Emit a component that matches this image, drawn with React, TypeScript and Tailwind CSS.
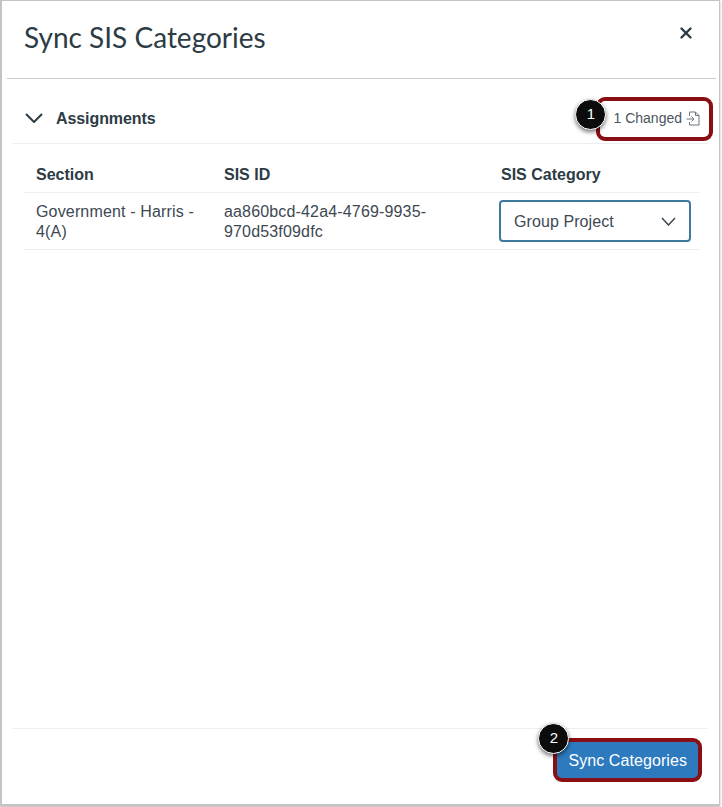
import { X } from "lucide-react";

const Badge = ({ n }: { n: number }) => (
  <span className="absolute flex h-[31px] w-[31px] items-center justify-center rounded-full border border-white bg-[#0c0c0c] text-[15px] text-white shadow-[0_2px_4px_rgba(0,0,0,0.55)]">
    {n}
  </span>
);

const Chevron = ({ w, h, sw, color }: { w: number; h: number; sw: number; color: string }) => (
  <svg width={w} height={h} viewBox={`0 0 ${w} ${h}`} fill="none" stroke={color} strokeWidth={sw}>
    <path d={`M1 1 L${w / 2} ${h - 1} L${w - 1} 1`} />
  </svg>
);

const ImportIcon = () => (
  <svg className="-ml-[1px] mr-[1px]" width="14" height="15" viewBox="0 0 14 15" fill="none" stroke="#6b7580" strokeWidth="1">
    <path d="M3.5 5V1h6l3.5 3.5V14H3.5v-3" />
    <path d="M9.5 1v3.5H13" />
    <path d="M0.5 8h7.5M5.5 5.5 8 8l-2.5 2.5" />
  </svg>
);

export default function App() {
  return (
    <div className="flex h-[807px] w-[722px] flex-col bg-white pb-[1px] pr-[2px] font-['Liberation_Sans',sans-serif] text-[#2d3b45]">
      <div className="flex h-full flex-col border-b-2 border-l-2 border-r border-t border-[#c4c4c4] shadow-[0_1px_2px_rgba(0,0,0,0.3)]">
        <header className="ml-[5px] mr-[3px] flex h-[78px] shrink-0 items-center justify-between border-b border-[#c7cdd1] pb-[6px] pl-[17px] pr-[21px]">
          <h1 className="font-['Lato',sans-serif] text-[28px] font-normal leading-none">Sync SIS Categories</h1>
          <X size={18} strokeWidth={3.2} className="mb-[8px] text-[#2d3b45]" />
        </header>

        <main className="mx-[11px] flex flex-1 flex-col">
          <div className="flex h-[65px] shrink-0 items-center justify-between border-b border-[#eceeef] pl-[12px] pr-[7px] pt-[14px]">
            <div className="flex items-center gap-[13px]">
              <Chevron w={18} h={10} sw={2} color="#2d3b45" />
              <span className="pt-[1px] text-[16px] font-bold tracking-[-0.005em]">Assignments</span>
            </div>
            <div className="relative flex items-center gap-[5px] text-[14px] text-[#4a5560]">
              <span>1 Changed</span>
              <ImportIcon />
              <div className="absolute -bottom-[12px] -left-[17px] -right-[12px] -top-[11px] rounded-[9px] border-[4px] border-[#8a0f14]" />
              <div className="absolute -left-[38px] top-[-9px]">
                <Badge n={1} />
              </div>
            </div>
          </div>

          <div className="flex-1 pl-[11px] pr-[8px]">
            <div className="grid h-[49px] grid-cols-[188px_277px_1fr] items-center border-b border-[#eceeef] pl-[12px] pt-[14px] text-[16px] font-bold">
              <span>Section</span>
              <span>SIS ID</span>
              <span>SIS Category</span>
            </div>
            <div className="grid h-[57px] grid-cols-[188px_277px_1fr] items-center border-b border-[#eceeef] pl-[12px] text-[16px] leading-[20px] text-[#3d4852]">
              <span className="w-[175px] pt-[2px] tracking-[0.01em]">Government - Harris - 4(A)</span>
              <span className="w-[240px] pt-[2px] tracking-[0.01em]">aa860bcd-42a4-4769-9935-970d53f09dfc</span>
              <div className="-ml-[2px] flex h-[42px] w-[192px] items-center justify-between rounded-[4px] border-2 border-[#3f7a9e] pl-[13px] pr-[13px]">
                <span className="pt-[2px] tracking-[0.005em]">Group Project</span>
                <Chevron w={15} h={9} sw={1.5} color="#3d4852" />
              </div>
            </div>
          </div>

          <footer className="flex h-[76px] shrink-0 items-start justify-end border-t border-[#eceeef] pr-[10px] pt-[13px]">
            <div className="relative">
              <button className="h-[36px] rounded-[4px] bg-[#2d7abf] px-[11px] pt-[1px] text-[16px] tracking-[0.005em] text-white">
                Sync Categories
              </button>
              <div className="absolute -inset-[4px] rounded-[9px] border-[4px] border-[#8a0f14]" />
              <div className="absolute -left-[19px] -top-[19px]">
                <Badge n={2} />
              </div>
            </div>
          </footer>
        </main>
      </div>
    </div>
  );
}
